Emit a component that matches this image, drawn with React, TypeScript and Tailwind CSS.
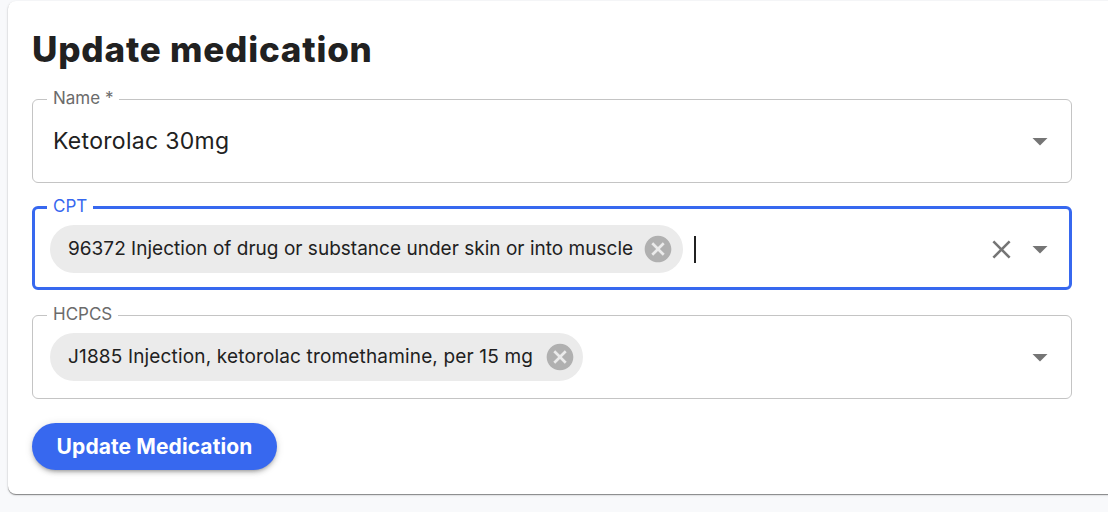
const font = "[font-family:Inter,'Noto_Sans',sans-serif]"

function Caret() {
  return (
    <svg width="36" height="36" viewBox="0 0 24 24" className="fill-[#757575] shrink-0 -mx-[6px]">
      <path d="M7 10l5 5 5-5z" />
    </svg>
  )
}

function ChipDelete() {
  return (
    <svg width="32" height="32" viewBox="0 0 24 24" className="fill-[#b0b0b0] shrink-0">
      <path d="M12 2C6.47 2 2 6.47 2 12s4.47 10 10 10 10-4.47 10-10S17.53 2 12 2zm5 13.59L15.59 17 12 13.41 8.41 17 7 15.59 10.59 12 7 8.41 8.41 7 12 10.59 15.59 7 17 8.41 13.41 12 17 15.59z" />
    </svg>
  )
}

function Chip({ label, text, box }: { label: string; text: string; box: string }) {
  return (
    <div className={`h-12 rounded-full bg-[#ebebeb] flex items-center pl-[18px] shrink-0 ${box}`}>
      <span className={`text-[19px] text-[#212121] whitespace-nowrap ${text}`}>{label}</span>
      <ChipDelete />
    </div>
  )
}

function Field({ label, focused, children, mt }: { label: string; focused?: boolean; children: React.ReactNode; mt: string }) {
  return (
    <div
      className={`relative h-[84px] w-[1040px] rounded-md flex items-center ${mt} ${
        focused ? 'border-[3px] border-[#3768ef] pl-[15px] pr-[17px] pt-[2px]' : 'border border-[#c4c4c4] pl-[17px] pr-[19px]'
      }`}
    >
      <span
        className={`absolute bg-white px-[6px] text-[17px] leading-5 ${
          focused ? 'text-[#3768ef] left-[12px] -top-[13px]' : 'text-[#6b6b6b] left-[14px] -top-[12px]'
        }`}
      >
        {label}
      </span>
      {children}
    </div>
  )
}

export default function App() {
  return (
    <div className={`w-[1108px] h-[512px] overflow-hidden bg-[#f8f9fb] pl-2 pt-px ${font}`}>
      <div className="w-[1120px] h-[493px] bg-white rounded-lg shadow-[0_1px_1px_rgba(0,0,0,0.42),0_1px_3px_rgba(0,0,0,0.12)] pl-6 pt-[28px]">
        <h1 className="text-[35px] leading-10 font-extrabold text-[#212121] tracking-[0.8px]">Update medication</h1>
        <Field label="Name *" mt="mt-[30px]">
          <span className="flex-1 pl-[3px] text-[23px] text-[#212121] tracking-[0.3px]">Ketorolac 30mg</span>
          <Caret />
        </Field>
        <Field label="CPT" focused mt="mt-[23px]">
          <Chip
            label="96372 Injection of drug or substance under skin or into muscle"
            text="tracking-[0.02px] mr-[9px]"
            box="pr-[9px]"
          />
          <div className="ml-[11px] w-[2px] h-[27px] bg-[#212121]" />
          <div className="flex-1" />
          <svg width="31" height="31" viewBox="0 0 24 24" className="fill-[#757575] mr-[11px]">
            <path d="M19 6.41 17.59 5 12 10.59 6.41 5 5 6.41 10.59 12 5 17.59 6.41 19 12 13.41 17.59 19 19 17.59 13.41 12z" />
          </svg>
          <Caret />
        </Field>
        <Field label="HCPCS" mt="mt-[25px]">
          <Chip
            label="J1885 Injection, ketorolac tromethamine, per 15 mg"
            text="tracking-[0.16px] mr-[11px]"
            box="pr-[7px]"
          />
          <div className="flex-1" />
          <Caret />
        </Field>
        <button className="mt-6 h-[47px] w-[245px] pt-px rounded-full bg-[#3768ef] text-white text-[21px] font-bold tracking-[0.1px] shadow-[0_3px_3px_-2px_rgba(0,0,0,0.2),0_3px_4px_rgba(0,0,0,0.14),0_1px_8px_rgba(0,0,0,0.12)]">
          Update Medication
        </button>
      </div>
    </div>
  )
}
